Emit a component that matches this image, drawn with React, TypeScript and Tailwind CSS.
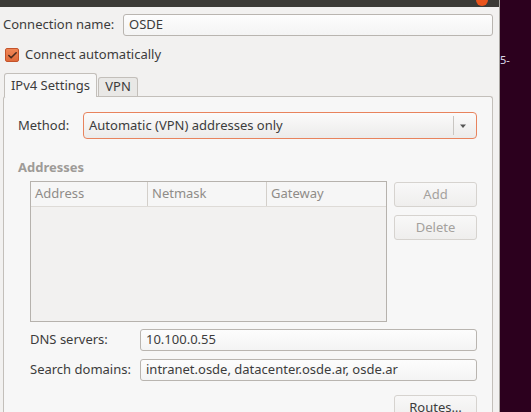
import { Check } from "lucide-react";

const fieldCls =
  "h-[22px] rounded-[3px] border border-[#b9b5b0] bg-gradient-to-b from-[#fdfdfd] to-[#f4f4f4] px-[5px] flex items-center text-[#3c3c3c]";

const btnCls =
  "w-[83px] rounded-[3px] border border-[#d6d3cf] bg-gradient-to-b from-[#f8f8f8] to-[#efeeed] flex items-center justify-center";

const App = () => {
  return (
    <div
      className="w-[531px] h-[412px] flex overflow-hidden text-[13px] text-[#3c3c3c]"
      style={{ fontFamily: '"Noto Sans", "DejaVu Sans", sans-serif' }}
    >
      <div className="w-[500px] h-full flex flex-col bg-[#f2f1f0] border-r border-[#a9a6a2]">
        {/* title bar strip */}
        <div className="relative h-[7px] bg-[#3c3b37] shrink-0">
          <div className="absolute left-[476px] top-[-6px] w-[12px] h-[12px] rounded-full bg-[#e9541c]" />
        </div>

        <div className="flex items-center mt-[7px] h-[22px]">
          <span className="ml-[3px] w-[120px]">Connection name:</span>
          <div className={`${fieldCls} w-[370px]`}>OSDE</div>
        </div>

        <div className="flex items-center mt-[11px] h-[16px]">
          <div className="ml-[5px] w-[14px] h-[14px] rounded-[2px] border border-[#c4532a] bg-gradient-to-b from-[#f08656] to-[#df6a3a] flex items-center justify-center">
            <Check className="w-[11px] h-[11px] text-[#4a2a1e]" strokeWidth={3.5} />
          </div>
          <span className="ml-[6px]">Connect automatically</span>
        </div>

        {/* tabs */}
        <div className="flex items-end mt-[10px] ml-[4px] h-[23px]">
          <div className="h-[24px] w-[93px] -mb-px z-10 rounded-t-[3px] border border-b-0 border-[#c3bfba] bg-[#f7f7f7] flex items-center justify-center">
            IPv4 Settings
          </div>
          <div className="h-[19px] w-[40px] ml-[1px] rounded-t-[3px] border border-b-0 border-[#c3bfba] bg-[#e9e8e6] flex items-center justify-center">
            VPN
          </div>
        </div>

        <div className="ml-[3px] w-[490px] flex-1 rounded-t-[3px] border border-b-0 border-[#c3bfba] bg-[#f7f7f7] flex flex-col">
          <div className="flex items-center mt-[15px] h-[27px]">
            <span className="ml-[14px] w-[65px]">Method:</span>
            <div className="w-[394px] h-[27px] rounded-[4px] border border-[#e8835d] bg-gradient-to-b from-[#fbfbfb] to-[#ecebea] flex items-center">
              <span className="ml-[5px] flex-1">Automatic (VPN) addresses only</span>
              <div className="w-px h-[19px] bg-[#c9c6c2]" />
              <svg width="8" height="6" viewBox="0 0 8 6" className="ml-[5px] mr-[9px]">
                <path d="M1 1.5 L7 1.5 L4 5 Z" fill="#555" />
              </svg>
            </div>
          </div>

          <div className="ml-[14px] mt-[21px] font-bold text-[#9e9b97] leading-[14px]">Addresses</div>

          <div className="flex mt-[7px]">
            <div className="ml-[26px] w-[357px] h-[141px] border border-[#b6b2ad] bg-[#f2f1f0] flex flex-col">
              <div className="h-[25px] flex text-[#8f8c88] bg-[#f6f6f6] border-b border-[#dedbd7]">
                <div className="w-[117px] border-r border-[#d3cfca] flex items-center pl-[4px]">Address</div>
                <div className="w-[119px] border-r border-[#d3cfca] flex items-center pl-[4px]">Netmask</div>
                <div className="flex-1 flex items-center pl-[4px]">Gateway</div>
              </div>
            </div>
            <div className="ml-[7px] flex flex-col gap-[8px] pt-[1px] text-[#a4a19d]">
              <div className={`${btnCls} h-[25px]`}>Add</div>
              <div className={`${btnCls} h-[25px]`}>Delete</div>
            </div>
          </div>

          <div className="flex items-center mt-[7px] h-[22px]">
            <span className="ml-[26px] w-[110px]">DNS servers:</span>
            <div className={`${fieldCls} w-[337px]`}>10.100.0.55</div>
          </div>
          <div className="flex items-center mt-[8px] h-[22px]">
            <span className="ml-[26px] w-[110px]">Search domains:</span>
            <div className={`${fieldCls} w-[337px]`}>intranet.osde, datacenter.osde.ar, osde.ar</div>
          </div>

          <div className="flex mt-[14px]">
            <div className={`${btnCls} ml-[390px] h-[25px] items-start pt-[2px] text-[#3c3c3c] border-[#c9c5c0]`}>Routes…</div>
          </div>
        </div>
      </div>

      <div className="flex-1 h-full bg-[#2c001e] relative">
        <span className="absolute left-[0px] top-[54px] text-[11px] text-[#dcd8e8] leading-none">5-</span>
      </div>
    </div>
  );
};

export default App;
